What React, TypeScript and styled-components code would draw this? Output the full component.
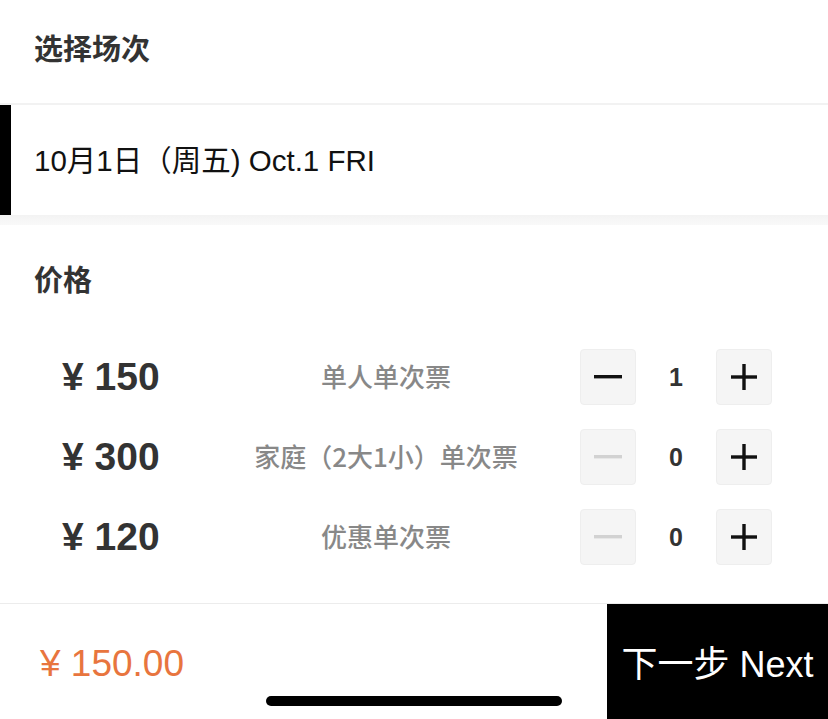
import React from "react";
import styled, { createGlobalStyle } from "styled-components";

const Global = createGlobalStyle`
  html, body { margin: 0; padding: 0; background: #fff; }
  body {
    font-family: "Liberation Sans", "Noto Sans CJK SC", sans-serif;
    color: #222;
  }
  * { box-sizing: border-box; }
`;

const Page = styled.div`
  position: relative;
  width: 828px;
  height: 719px;
  overflow: hidden;
  display: flex;
  flex-direction: column;
  background: #fff;
  & > * { flex-shrink: 0; }
`;

const SectionTitle = styled.div<{ $top: number; $height: number }>`
  height: ${(p) => p.$height}px;
  padding: ${(p) => p.$top}px 0 0 34px;
  font-family: "Noto Sans CJK SC", sans-serif;
  font-size: 29px;
  font-weight: 600;
  line-height: 40px;
  color: #333;
`;

const Divider = styled.div<{ $h: number; $color: string }>`
  height: ${(p) => p.$h}px;
  background: ${(p) => p.$color};
`;

const DateRow = styled.div`
  height: 110px;
  display: flex;
  align-items: center;
  border-left: 11px solid #000;
  padding: 0 0 4px 23px;
  font-family: "Liberation Sans", "Noto Sans CJK SC", sans-serif;
  font-size: 29.5px;
  color: #111;
`;

const Band = styled.div`
  height: 10px;
  background: linear-gradient(#f3f3f3, #f9f9f9);
`;

const Rows = styled.div`
  display: flex;
  flex-direction: column;
  padding: 36px 56px 0 62px;
  height: 302px;
`;

const Row = styled.div`
  height: 80px;
  display: grid;
  grid-template-columns: 130px 1fr auto;
  align-items: center;
`;

const Price = styled.div`
  font-family: "Liberation Sans", sans-serif;
  font-weight: 700;
  font-size: 39px;
  color: #333;
  white-space: pre;
`;

const Label = styled.div`
  text-align: center;
  padding-bottom: 3px;
  font-family: "Noto Sans CJK SC", sans-serif;
  font-size: 26px;
  font-weight: 500;
  color: #888;
`;

const Stepper = styled.div`
  display: flex;
  align-items: center;
`;

const StepBtn = styled.div<{ $disabled?: boolean }>`
  width: 56px;
  height: 56px;
  border-radius: 4px;
  background: #f5f5f5;
  border: 1px solid #eeeeee;
  display: flex;
  align-items: center;
  justify-content: center;
  color: ${(p) => (p.$disabled ? "#d2d2d2" : "#111")};
`;

const Count = styled.div`
  width: 80px;
  text-align: center;
  font-family: "Liberation Sans", sans-serif;
  font-weight: 700;
  font-size: 25px;
  color: #333;
`;

const Footer = styled.div`
  height: 116px;
  display: flex;
  align-items: stretch;
  border-top: 1px solid #ececec;
`;

const Total = styled.div`
  flex: 1;
  display: flex;
  align-items: center;
  padding: 4px 0 0 40px;
  font-family: "Liberation Sans", sans-serif;
  font-size: 37px;
  color: #e8753e;
  white-space: pre;
`;

const NextBtn = styled.div`
  width: 221px;
  background: #000;
  color: #fff;
  display: flex;
  align-items: center;
  justify-content: center;
  padding: 0 0 2px 0;
  font-family: "Liberation Sans", "Noto Sans CJK SC", sans-serif;
  font-size: 36px;
  font-weight: 400;
  white-space: pre;
`;

const HomeIndicator = styled.div`
  position: absolute;
  left: 266px;
  bottom: 13px;
  width: 296px;
  height: 10px;
  border-radius: 5px;
  background: #000;
`;

const Minus = () => (
  <svg width="28" height="4" viewBox="0 0 28 4">
    <rect x="0" y="0" width="28" height="3.4" fill="currentColor" />
  </svg>
);

const Plus = () => (
  <svg width="26" height="26" viewBox="0 0 26 26">
    <rect x="0" y="11.3" width="26" height="3.4" fill="currentColor" />
    <rect x="11.3" y="0" width="3.4" height="26" fill="currentColor" />
  </svg>
);

const tickets = [
  { price: "¥ 150", label: "单人单次票", count: 1 },
  { price: "¥ 300", label: "家庭（2大1小）单次票", count: 0 },
  { price: "¥ 120", label: "优惠单次票", count: 0 },
];

export default function App() {
  return (
    <>
      <Global />
      <Page>
        <SectionTitle $top={27} $height={103}>选择场次</SectionTitle>
        <Divider $h={2} $color="#f2f2f2" />
        <DateRow>10月1日（周五) Oct.1 FRI</DateRow>
        <Band />
        <SectionTitle $top={33} $height={76}>价格</SectionTitle>
        <Rows>
          {tickets.map((t) => (
            <Row key={t.label}>
              <Price>{t.price}</Price>
              <Label>{t.label}</Label>
              <Stepper>
                <StepBtn $disabled={t.count === 0}>
                  <Minus />
                </StepBtn>
                <Count>{t.count}</Count>
                <StepBtn>
                  <Plus />
                </StepBtn>
              </Stepper>
            </Row>
          ))}
        </Rows>
        <Footer>
          <Total>{"¥ 150.00"}</Total>
          <NextBtn>下一步 Next</NextBtn>
        </Footer>
        <HomeIndicator />
      </Page>
    </>
  );
}
